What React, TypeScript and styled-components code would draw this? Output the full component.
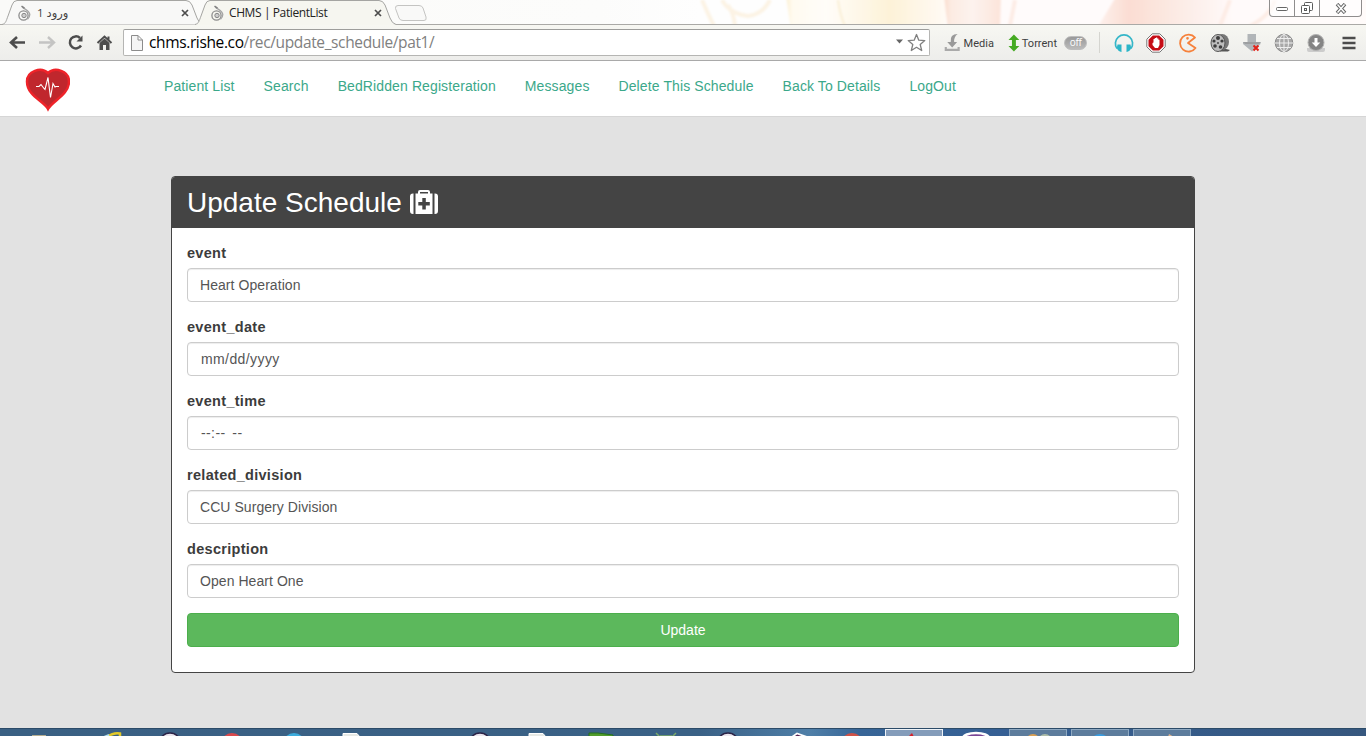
import React from "react";
import styled, { createGlobalStyle, css } from "styled-components";

const GlobalStyle = createGlobalStyle`
  * { box-sizing: border-box; }
  html, body { margin: 0; padding: 0; }
  body { font-family: "Liberation Sans", Arial, sans-serif; overflow: hidden; }
`;

const Screen = styled.div`
  width: 1366px;
  height: 736px;
  display: flex;
  flex-direction: column;
  overflow: hidden;
  background: #e2e2e2;
`;

const TabStrip = styled.header`
  position: relative;
  height: 25px;
  flex: none;
  display: flex;
  align-items: flex-start;
  padding-left: 2px;
  background: linear-gradient(90deg, #fafaf8 0, #fcfcfb 600px, #fefefe 700px);
  border-bottom: 1px solid #aaa9a6;
`;

const Wallpaper = styled.svg`
  position: absolute;
  left: 660px;
  top: 0;
`;

const Tab = styled.div<{ $front?: boolean }>`
  position: relative;
  z-index: ${(p) => (p.$front ? 2 : 1)};
  width: 201px;
  height: 25px;
  margin-right: ${(p) => (p.$front ? -6 : -8)}px;
  display: flex;
  align-items: center;
  padding: 0 14px 0 15px;
`;

const TabShape = styled.svg`
  position: absolute;
  left: 0;
  top: 0;
  z-index: -1;
`;

const TabTitle = styled.span<{ $rtl?: boolean }>`
  flex: 1;
  margin-left: 4px;
  font: 12px/24px "Open Sans", "DejaVu Sans", sans-serif;
  letter-spacing: -0.4px;
  color: #222;
  text-align: left;
  white-space: nowrap;
  ${(p) =>
    p.$rtl &&
    css`
      margin-left: 5px;
      direction: rtl;
      letter-spacing: 0;
      font-size: 11.5px;
      color: #444;
    `}
`;

const NewTab = styled.svg`
  margin-left: -1px;
  position: relative;
  z-index: 1;
`;

const WindowControls = styled.div`
  position: relative;
  margin-left: auto;
  margin-right: 4px;
  display: flex;
  width: 93px;
  height: 17px;
  border: 1px solid #8f8d8d;
  border-top: 0;
  border-radius: 0 0 4px 4px;
  background: rgba(255, 255, 255, 0.6);
`;

const WindowButton = styled.div<{ $w: number }>`
  width: ${(p) => p.$w}px;
  display: flex;
  align-items: center;
  justify-content: center;
  & + & { border-left: 1px solid #8f8d8d; }
`;

const Toolbar = styled.div`
  height: 36px;
  flex: none;
  display: flex;
  align-items: center;
  background: linear-gradient(#f7f7f2, #ededeb);
  border-bottom: 1px solid #a9a9a9;
  padding-left: 9px;
`;

const NavIcon = styled.div<{ $w: number }>`
  width: ${(p) => p.$w}px;
  height: 18px;
  flex: none;
`;

const AddressBar = styled.div`
  width: 807px;
  height: 27px;
  flex: none;
  display: flex;
  align-items: center;
  padding: 0 3px 0 7px;
  background: #fff;
  border: 1px solid #b5b5b3;
  border-top-color: #9d9d9b;
  border-radius: 2px;
`;

const Address = styled.div`
  flex: 1;
  margin-left: 6px;
  font: 15.5px/25px "Open Sans", "Noto Sans", sans-serif;
  letter-spacing: -0.37px;
  color: #808080;
  white-space: nowrap;
  b { font-weight: 400; color: #000; }
`;

const ToolLabel = styled.span<{ $w: number }>`
  width: ${(p) => p.$w}px;
  font: 11px/16px Roboto, sans-serif;
  color: #3e3e3e;
  white-space: nowrap;
  position: relative;
  top: 1px;
`;

const OffPill = styled.span`
  width: 23px;
  height: 14px;
  border-radius: 7px;
  background: linear-gradient(#999, #bbb);
  border: 1px solid #bdbdbd;
  color: #fff;
  font: 10px/11px "Open Sans", sans-serif;
  text-align: center;
  letter-spacing: -0.3px;
`;

const Divider = styled.i`
  width: 1px;
  height: 21px;
  margin: 0 8px 0 12px;
  background: #d5d5d0;
`;

const Extension = styled.div`
  width: 32px;
  height: 24px;
  flex: none;
  display: flex;
  align-items: center;
  justify-content: center;
`;

const MenuSlot = styled(Extension)`
  width: 34px;
`;

const SiteHeader = styled.nav`
  height: 56px;
  flex: none;
  display: flex;
  background: #fff;
  border-bottom: 1px solid #d6d6d6;
  padding-left: 25px;
`;

const Logo = styled.svg`
  margin-top: 7px;
  margin-right: 94px;
`;

const NavLink = styled.a`
  margin: 15px 29px 0 0;
  font-size: 14px;
  line-height: 20px;
  letter-spacing: 0.11px;
  color: #3ba88a;
  white-space: nowrap;
`;

const Main = styled.main`
  flex: 1;
  padding-top: 59px;
  background: #e2e2e2;
`;

const Panel = styled.section`
  width: 1024px;
  height: 497px;
  margin: 0 auto;
  background: #fff;
  border: 1px solid #444;
  border-radius: 4px;
  overflow: hidden;
`;

const PanelHeading = styled.h1`
  height: 51px;
  margin: 0;
  padding: 0 15px;
  display: flex;
  align-items: center;
  background: #444;
  color: #fff;
  font-size: 28px;
  font-weight: 400;
  line-height: 51px;
  svg { margin-left: 8px; }
`;

const Form = styled.form`
  padding: 15px;
`;

const Field = styled.div`
  height: 74px;
`;

const Label = styled.label`
  display: block;
  height: 25px;
  font-size: 14.5px;
  line-height: 21px;
  font-weight: 700;
  letter-spacing: 0.3px;
  color: #3c3c3c;
`;

const Control = styled.div<{ $spaced?: boolean }>`
  height: 34px;
  padding: 0 12px;
  border: 1px solid #ccc;
  border-radius: 4px;
  box-shadow: inset 0 1px 1px rgba(0, 0, 0, 0.075);
  font-size: 14px;
  line-height: 32px;
  letter-spacing: 0.06px;
  color: #555;
  white-space: pre;
  ${(p) =>
    p.$spaced &&
    css`
      padding-left: 13px;
      letter-spacing: 0.4px;
      word-spacing: 2.5px;
    `}
`;

const SubmitButton = styled.button`
  display: block;
  width: 100%;
  height: 34px;
  border: 1px solid #4cae4c;
  border-radius: 4px;
  background: #5cb85c;
  color: #fff;
  font: 14px/20px "Liberation Sans", Arial, sans-serif;
`;

const Taskbar = styled.footer`
  height: 8px;
  flex: none;
  display: flex;
  padding-left: 15px;
  overflow: hidden;
  background: linear-gradient(90deg, #3a6083 0, #3a6186 700px, #4f7fa8 810px, #376597 860px, #355f94 1000px, #36577e 1366px);
  border-top: 1px solid #2c4b68;
`;

const TaskSlot = styled.div<{ $open?: "active" | "idle" }>`
  width: 62px;
  height: 8px;
  flex: none;
  svg { display: block; }
  ${(p) =>
    p.$open &&
    css`
      width: 58px;
      margin: 0 2px;
      border: 1px solid ${p.$open === "active" ? "#eef3f8" : "#8ea9c2"};
      border-bottom: 0;
      background: ${p.$open === "active" ? "#849cba" : "#5d7c9c"};
      svg { margin: -1px 0 0 -3px; }
    `}
`;

const Favicon = () => (
  <svg width="15" height="18" viewBox="0 0 15 18" fill="none">
    <circle cx="6.500" cy="11.500" r="4.600" stroke="#8d8d8d" strokeWidth="1.300" />
    <circle cx="7" cy="11.500" r="2.200" fill="#ccc" stroke="#888" />
    <path d="M5.500 3.200C8 5.500 12.500 6.500 12.800 10.500c0 2-1 3.500-2.300 4.800" stroke="#a5a5a5" strokeWidth="1.300" />
    <path d="M4.500 2.200l3 2" stroke="#808080" strokeWidth="1.500" />
  </svg>
);

const CloseMark = () => (
  <svg width="8" height="8" viewBox="0 0 8 8">
    <path d="M1 1l6 6M7 1L1 7" stroke="#4c4c4c" strokeWidth="1.700" />
  </svg>
);

const BrowserTab = ({ front, rtl, children }: { front?: boolean; rtl?: boolean; children: React.ReactNode }) => (
  <Tab $front={front}>
    <TabShape width="201" height="25" viewBox="0 0 201 25">
      <path
        d="M0 24.500C4 23.500 4 21 6 16L10 5Q11.500 .5 15 .5H184Q188 .5 190 5L195 18Q197 23.500 201 24.500"
        fill={front ? "#f6f6f0" : "#f8f8f7"}
        stroke="#a5a5a2"
      />
      {front && <path d="M1 25L4 23.500H197L201 25Z" fill="#f6f6f0" />}
    </TabShape>
    <Favicon />
    <TabTitle $rtl={rtl}>{children}</TabTitle>
    <CloseMark />
  </Tab>
);

const HeartLogo = () => (
  <Logo width="45" height="44" viewBox="0 0 45 44">
    <path
      d="M23 41C19 33 2 28 2 13.500C2 3 16-1.500 23 5C30-1.500 44 3 44 13.500C44 27 27 33 23 41Z"
      fill="#c0272d"
      stroke="#ee2329"
      strokeWidth="2.500"
    />
    <path d="M11 18.500h3l2-2 3 4 1 1 3-12 2.500 20 2.500-14 2 3.500 1-.5h3" fill="none" stroke="#fff" strokeWidth="1.100" />
  </Logo>
);

const Medkit = () => (
  <svg width="28" height="25" viewBox="0 0 28 25">
    <path d="M3.500 3.500V24H3a3 3 0 0 1-3-3V6.500a3 3 0 0 1 3-3zM24.500 3.500V24h.5a3 3 0 0 0 3-3V6.500a3 3 0 0 0-3-3z" fill="#fff" />
    <path
      fillRule="evenodd"
      d="M5.500 24V3.500H8V2Q8 0 10 0h8q2 0 2 2v1.500h2.500V24zM10 3.500h8V2h-8zM12.300 8v4h-4v3.500h4v4h3.500v-4h4v-3.500h-4v-4z"
      fill="#fff"
    />
  </svg>
);

const BackgroundArt = () => (
  <Wallpaper width="706" height="24" viewBox="0 0 706 24">
    <defs>
      <linearGradient id="warm">
        <stop offset="0" stopColor="#fcefd0" />
        <stop offset=".04" stopColor="#fffbf0" />
        <stop offset=".25" stopColor="#fffdf9" />
        <stop offset=".65" stopColor="#fdf2d8" />
        <stop offset="1" stopColor="#fffaf5" />
      </linearGradient>
      <linearGradient id="rose">
        <stop offset="0" stopColor="#fadccd" />
        <stop offset=".12" stopColor="#fcebe2" />
        <stop offset=".5" stopColor="#fdf3ee" />
        <stop offset="1" stopColor="#fce4da" />
      </linearGradient>
      <linearGradient id="fade">
        <stop offset="0" stopColor="#fef2ee" />
        <stop offset=".12" stopColor="#fbddd3" />
        <stop offset=".3" stopColor="#fcebe5" />
        <stop offset=".5" stopColor="#fffafa" />
        <stop offset="1" stopColor="#fffbfa" />
      </linearGradient>
      <filter id="soften" x="-5%" y="-20%" width="110%" height="140%">
        <feGaussianBlur stdDeviation="1" />
      </filter>
    </defs>
    <g filter="url(#soften)">
      <path d="M126 -5H286V30H131z" fill="url(#warm)" />
      <path d="M284 -5H341V30H288z" fill="url(#rose)" />
      <path d="M341 -5H460L438 30H340z" fill="#fffbfb" />
      <path d="M457 -5H712V30H436z" fill="url(#fade)" />
      <path d="M42 0Q48 14 54 26M62 0Q70 14 88 16Q102 15 110 0M68 5Q74 14 75 26" fill="none" stroke="#fcf3e4" strokeWidth="4" />
      <path d="M178 0Q180 15 185 26" fill="none" stroke="#faefd5" strokeWidth="2" />
      <path d="M355 0L350 26M570 0L560 26M590 26Q610 16 615 0" fill="none" stroke="#fdece5" strokeWidth="4" />
    </g>
  </Wallpaper>
);

const extensionIcons: React.ReactNode[] = [
  <svg key="headphones" width="20" height="20" viewBox="0 0 20 20">
    <path d="M3 15.500A8.600 8.600 0 1 1 17 15.500" fill="none" stroke="#35b6c8" strokeWidth="1.700" />
    <path d="M3.500 11.500H7.500v7.500Q4 18.500 2.800 15zM16.500 11.500H12.500v7.500Q16 18.500 17.200 15z" fill="#2bb5c8" />
  </svg>,
  <svg key="stop" width="20" height="20" viewBox="0 0 20 20">
    <path d="M6.200 .8h7.600l5.400 5.400v7.600l-5.400 5.400H6.200L.8 13.800V6.200z" fill="#fff" stroke="#777" />
    <path d="M6.800 2.500h6.400l4.300 4.300v6.400l-4.300 4.300H6.800l-4.300-4.300V6.800z" fill="#c60d16" />
    <path d="M6.500 10l1-.5V6h1.200V5H10v-.5h1.200v1h1.200v1.200h1.100V12l-1.500 3H9l-2.500-3z" fill="#fff" />
  </svg>,
  <svg key="chomp" width="20" height="20" viewBox="0 0 20 20" fill="none" stroke="#f6813b" strokeWidth="1.800">
    <path d="M17 4.500A8.500 8.500 0 1 0 17.500 15L10 10z" strokeLinejoin="round" />
    <circle cx="9.500" cy="5.300" r=".7" strokeWidth="1.300" />
  </svg>,
  <svg key="reel" width="20" height="20" viewBox="0 0 20 20">
    <path d="M10 16h6l4 1-2 1.500H10z" fill="#555" />
    <ellipse cx="12" cy="9" rx="7" ry="8" fill="#777" />
    <ellipse cx="8" cy="10" rx="7" ry="8.500" fill="#bdbdbd" stroke="#555" />
    <g fill="#3d3d3d">
      <circle cx="8" cy="5" r="2" /><circle cx="4" cy="8" r="1.600" /><circle cx="12" cy="8" r="1.600" />
      <circle cx="5" cy="13" r="1.800" /><circle cx="10.500" cy="14" r="1.800" /><circle cx="8" cy="10" r=".9" />
    </g>
  </svg>,
  <svg key="cancel" width="20" height="20" viewBox="0 0 20 20">
    <path d="M5.500 1h8.500v8h4.500v2L10 18.500 1 11V9h4.500z" fill="#b1b5b8" />
    <path d="M1 9h18l-2 2H3z" fill="#9c9ea0" />
    <path d="M11.500 12.500l5 5m0-5l-5 5" stroke="#e2231a" strokeWidth="2" />
  </svg>,
  <svg key="globe" width="20" height="20" viewBox="0 0 20 20" fill="#a8a8a8" stroke="#8b8b8b">
    <circle cx="10" cy="10" r="8.800" />
    <g stroke="#eee" fill="none">
      <ellipse cx="10" cy="10" rx="4.500" ry="8.500" />
      <path d="M10 1v18M1 10h18M3 5.500h14M3 14.500h14" />
    </g>
  </svg>,
  <svg key="save" width="20" height="20" viewBox="0 0 20 20">
    <path d="M1 15h18v2q0 2-2 2H3q-2 0-2-2z" fill="#ccc" />
    <circle cx="10" cy="9.500" r="8" fill="#858585" stroke="#b2b2b2" />
    <path d="M8.500 5h3v4.500h2.800L10 14 5.700 9.500h2.800z" fill="#fff" />
  </svg>,
];

const BallIcon = ({ fill, stroke }: { fill: string; stroke?: string }) => (
  <svg width="62" height="8" viewBox="0 0 62 8">
    <circle cx="31" cy="15" r="11" fill={fill} stroke={stroke} strokeWidth="1.500" />
  </svg>
);

const PageIcon = () => (
  <svg width="62" height="8" viewBox="0 0 62 8">
    <path d="M18 4.500H32L35 8H18z" fill="#e7e9e5" stroke="#fff" />
  </svg>
);

const tasks: { open?: "active" | "idle"; icon?: React.ReactNode }[] = [
  { icon: <svg width="62" height="8"><path d="M17 6h14v2H17z" fill="#b6ae91" /></svg> },
  { icon: <svg width="62" height="8"><path d="M30 8Q37 3 43 4.500v3" fill="none" stroke="#e2c929" strokeWidth="2.500" /><path d="M27 8l5-2" stroke="#b8e2ee" strokeWidth="2" /></svg> },
  { icon: <BallIcon fill="#ebe6ee" stroke="#2b2346" /> },
  { icon: <BallIcon fill="#d9484c" /> },
  { icon: <BallIcon fill="#3cabdc" /> },
  { icon: <PageIcon /> },
  {},
  { icon: <BallIcon fill="#ebe6ee" stroke="#2b2346" /> },
  { icon: <PageIcon /> },
  { icon: <svg width="62" height="8"><path d="M16 4h9l15 2v2H16z" fill="#509b2b" stroke="#247020" /></svg> },
  { icon: <svg width="62" height="8"><path d="M21 4l4 4M41 4l-4 4M25 7h12" stroke="#7daa68" strokeWidth="1.500" /></svg> },
  { icon: <BallIcon fill="#ebe6ee" stroke="#2b2346" /> },
  { icon: <svg width="62" height="8"><path d="M33 8l5-3.500 10 3.500z" fill="#542050" stroke="#fff" strokeWidth="1.800" /></svg> },
  { icon: <BallIcon fill="#cf5248" /> },
  { open: "active", icon: <svg width="62" height="8"><path d="M25 8l4-4 2 4z" fill="#d6202a" /></svg> },
  { icon: <svg width="62" height="8"><ellipse cx="31" cy="9" rx="13" ry="5" fill="#7a4696" stroke="#fff" strokeWidth="2.500" /></svg> },
  { open: "idle", icon: <svg width="62" height="8"><circle cx="26" cy="12" r="7" fill="#dba052" /><circle cx="38" cy="12" r="7" fill="#aebda8" /></svg> },
  { open: "idle", icon: <svg width="62" height="8"><circle cx="31" cy="15" r="10" fill="#3a9de0" /></svg> },
  { open: "idle", icon: <svg width="62" height="8"><path d="M38 5l5 3h-6z" fill="#e2b58d" /></svg> },
];

const links = ["Patient List", "Search", "BedRidden Registeration", "Messages", "Delete This Schedule", "Back To Details", "LogOut"];

const fields: { label: string; value: string; spaced?: boolean }[] = [
  { label: "event", value: "Heart Operation" },
  { label: "event_date", value: "mm/dd/yyyy", spaced: true },
  { label: "event_time", value: "--:-- --", spaced: true },
  { label: "related_division", value: "CCU Surgery Division" },
  { label: "description", value: "Open Heart One" },
];

export default function App() {
  return (
    <Screen>
      <GlobalStyle />
      <TabStrip>
        <BackgroundArt />
        <BrowserTab rtl>ورود 1</BrowserTab>
        <BrowserTab front>CHMS | PatientList</BrowserTab>
        <NewTab width="40" height="25" viewBox="0 0 40 25">
          <path d="M9 5.500H30Q33 5.500 34 8L37 17Q38 20.500 35 20.500H14Q11 20.500 10 18L6.500 8.500Q6 5.500 9 5.500Z" fill="#f9f9f8" stroke="#c4c4c2" />
        </NewTab>
        <WindowControls>
          <WindowButton $w={24}>
            <svg width="12" height="6"><rect x=".5" y="2.500" width="11" height="3" rx="1" fill="#fff" stroke="#666" /></svg>
          </WindowButton>
          <WindowButton $w={25}>
            <svg width="14" height="13" fill="#fff" stroke="#5b5b5b">
              <rect x="4.500" y=".5" width="8" height="8" rx="1" />
              <rect x="1.500" y="3.500" width="8" height="8" rx="1" />
              <rect x="4.500" y="6.500" width="2" height="2" />
            </svg>
          </WindowButton>
          <WindowButton $w={42}>
            <svg width="12" height="11" fill="none">
              <path d="M2 1l8 9M10 1L2 10" stroke="#666" strokeWidth="3.500" />
              <path d="M2.500 1.500l7 8M9.500 1.500l-7 8" stroke="#fff" strokeWidth="1.500" />
            </svg>
          </WindowButton>
        </WindowControls>
      </TabStrip>

      <Toolbar>
        <NavIcon $w={29}>
          <svg width="18" height="18"><path d="M8 3L2 8.500l6 5.500M2 8.500h14" fill="none" stroke="#4d4d4d" strokeWidth="2.600" /></svg>
        </NavIcon>
        <NavIcon $w={29}>
          <svg width="18" height="18"><path d="M10 3l6 5.500-6 5.500M1 8.500h14" fill="none" stroke="#c4c4c3" strokeWidth="2.400" /></svg>
        </NavIcon>
        <NavIcon $w={29}>
          <svg width="18" height="18"><path d="M14 11.500A6 6 0 1 1 13 4" fill="none" stroke="#4d4d4d" strokeWidth="2.500" /><path d="M15.500 1.500v6H9.500z" fill="#4d4d4d" /></svg>
        </NavIcon>
        <NavIcon $w={27}>
          <svg width="18" height="18"><path d="M1.500 9L8.500 2.500l7 6.500M12.500 2.500v4" fill="none" stroke="#4d4d4d" strokeWidth="2" /><path d="M3.500 9l5-4.500 5 4.500V16h-3.500v-5H7v5H3.500z" fill="#4d4d4d" /></svg>
        </NavIcon>
        <AddressBar>
          <svg width="12" height="16"><path d="M.5.500h6.500l4.500 4.500v10.500H.5zM7 .5V5h4.500" fill="#f5f5f5" stroke="#8c8c8c" /></svg>
          <Address><b>chms.rishe.co</b>/rec/update_schedule/pat1/</Address>
          <svg width="30" height="20" viewBox="0 0 30 20">
            <path d="M0 6.500h7L3.500 10.500z" fill="#666" />
            <path d="M20.500 1.500l2.300 5.700 6 .4-4.600 3.900 1.500 6-5.200-3.200-5.200 3.200 1.500-6-4.600-3.900 6-.4z" fill="#fff" stroke="#808080" strokeWidth="1.300" strokeLinejoin="round" />
          </svg>
        </AddressBar>
        <svg width="34" height="18" viewBox="-15 0 34 18">
          <path d="M1 13v3h13v-3" fill="none" stroke="#aaa" strokeWidth="2.200" />
          <path d="M13 0Q5 0 6 8H2.500l5 5.500 5-5.500H9.500Q9 3 13 0z" fill="#999" />
        </svg>
        <ToolLabel $w={45}>Media</ToolLabel>
        <svg width="14" height="18" viewBox="0 0 14 18"><path d="M6 .5l5.500 5.500H8v6h3.500L6 17.500.5 12H4V6H.5z" fill="#45aa22" /></svg>
        <ToolLabel $w={43}>Torrent</ToolLabel>
        <OffPill>off</OffPill>
        <Divider />
        {extensionIcons.map((icon, i) => (
          <Extension key={i}>{icon}</Extension>
        ))}
        <MenuSlot>
          <svg width="14" height="14"><path d="M.5 2h13M.5 7h13M.5 12h13" stroke="#4c4c4c" strokeWidth="2.600" /></svg>
        </MenuSlot>
      </Toolbar>

      <SiteHeader>
        <HeartLogo />
        {links.map((text) => (
          <NavLink key={text}>{text}</NavLink>
        ))}
      </SiteHeader>

      <Main>
        <Panel>
          <PanelHeading>Update Schedule<Medkit /></PanelHeading>
          <Form>
            {fields.map((f) => (
              <Field key={f.label}>
                <Label>{f.label}</Label>
                <Control $spaced={f.spaced}>{f.value}</Control>
              </Field>
            ))}
            <SubmitButton type="button">Update</SubmitButton>
          </Form>
        </Panel>
      </Main>

      <Taskbar>
        {tasks.map((t, i) => (
          <TaskSlot key={i} $open={t.open}>{t.icon}</TaskSlot>
        ))}
      </Taskbar>
    </Screen>
  );
}
